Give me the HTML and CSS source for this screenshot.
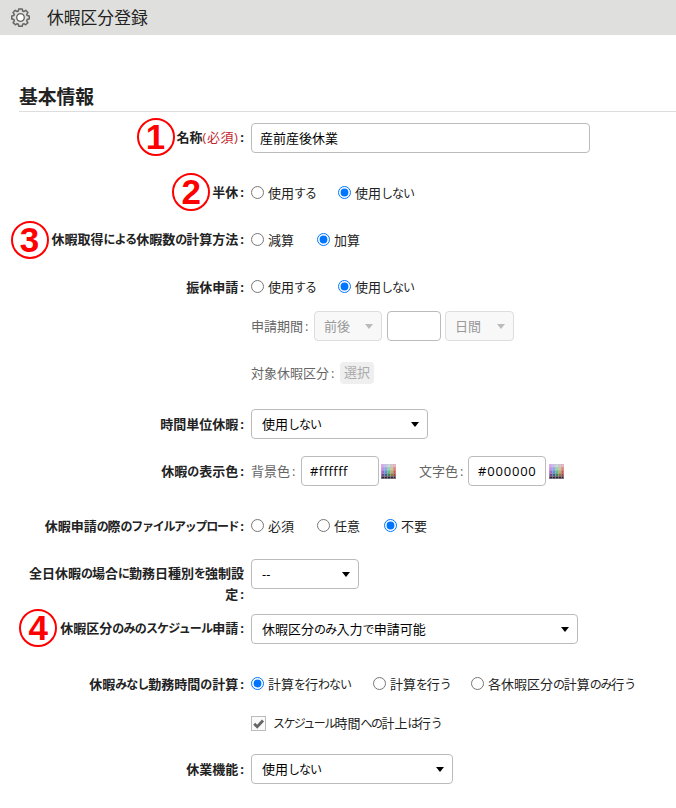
FILE: index.html
```
<!DOCTYPE html>
<html lang="ja">
<head>
<meta charset="utf-8">
<title>休暇区分登録</title>
<link rel="stylesheet" href="styles.css">
</head>
<body>
<svg class="defs" width="0" height="0">
  <symbol id="palette" viewBox="0 0 15 15">
    <rect width="15" height="15" fill="#b9a9b9"/>
    <path d="M0 0h3v3H0z" fill="#d9a8ee"/><path d="M3 0h3v3H3z" fill="#c6c2f5"/><path d="M6 0h3v3H6z" fill="#bfe0dc"/><path d="M9 0h3v3H9z" fill="#d9c6c8"/><path d="M12 0h3v3h-3z" fill="#f0b4b4"/>
    <path d="M0 3h3v3H0z" fill="#c78cf0"/><path d="M3 3h3v3H3z" fill="#86a8ee"/><path d="M6 3h3v3H6z" fill="#8fdcaa"/><path d="M9 3h3v3H9z" fill="#c5cf8c"/><path d="M12 3h3v3h-3z" fill="#ee7868"/>
    <path d="M0 6h3v3H0z" fill="#a466cf"/><path d="M3 6h3v3H3z" fill="#5690d8"/><path d="M6 6h3v3H6z" fill="#55c18a"/><path d="M9 6h3v3H9z" fill="#b2b45c"/><path d="M12 6h3v3h-3z" fill="#d94f48"/>
    <path d="M0 9h3v3H0z" fill="#704a94"/><path d="M3 9h3v3H3z" fill="#3c5f9c"/><path d="M6 9h3v3H6z" fill="#3a8a50"/><path d="M9 9h3v3H9z" fill="#867c3e"/><path d="M12 9h3v3h-3z" fill="#a43a34"/>
    <path d="M0 12h15v3H0z" fill="#28202c"/>
    <path d="M.5 0v15M3.5 0v15M6.5 0v15M9.5 0v15M12.5 0v15M0 .5h15M0 3.5h15M0 6.5h15M0 9.5h15M0 12.5h15M14.5 0v15M0 14.5h15" stroke="#cbbccd" stroke-width=".8" opacity=".6"/>
  </symbol>
</svg>

<header class="bar">
  <svg class="gear" viewBox="0 0 20 20" fill="none" stroke="#666" stroke-width="1.6" stroke-linejoin="round">
    <path d="M8.2 1h3.6l.5 2.2 1.2.5 2-1.3 2.3 2.4-1.3 1.9.5 1.3 2.2.4v3.3l-2.2.5-.5 1.3 1.3 1.9-2.4 2.3-1.9-1.2-1.2.5-.5 2.2H8.2l-.5-2.2-1.2-.5-1.9 1.2-2.4-2.3 1.3-1.9-.5-1.3L.8 11.700V8.400L3 8l.5-1.300-1.300-1.900 2.300-2.400 2 1.300 1.200-.5z"/>
    <circle cx="10" cy="10" r="3.900"/>
    <circle cx="10" cy="10" r="3.100" fill="#fff" stroke="none"/>
  </svg>
  <h1>休暇区分登録</h1>
</header>

<main>
  <h2>基本情報</h2>

  <div class="row r1">
    <label class="name"><span class="num">1</span>名称<span class="req">(必須)</span><b>:</b></label>
    <div class="box name-box">産前産後休業</div>
  </div>

  <div class="row r2">
    <label class="name"><span class="num">2</span>半休<b>:</b></label>
    <div class="opts">
      <label class="w87"><input type="radio" name="half"><span>使用<i>する</i></span></label>
      <label><input type="radio" name="half" checked><span>使用<i>しない</i></span></label>
    </div>
  </div>

  <div class="row r3">
    <label class="name"><span class="num">3</span>休暇取得<i>による</i>休暇数<i>の</i>計算方法<b>:</b></label>
    <div class="opts">
      <label class="w66"><input type="radio" name="calc"><span>減算</span></label>
      <label><input type="radio" name="calc" checked><span>加算</span></label>
    </div>
  </div>

  <div class="row r4">
    <label class="name">振休申請<b>:</b></label>
    <div class="opts">
      <label class="w87"><input type="radio" name="sub"><span>使用<i>する</i></span></label>
      <label><input type="radio" name="sub" checked><span>使用<i>しない</i></span></label>
    </div>
  </div>

  <div class="row r5">
    <span class="name"></span>
    <span class="gray period">申請期間<b>:</b></span>
    <div class="box select off s1">前後</div>
    <div class="box days"></div>
    <div class="box select off s2">日間</div>
  </div>

  <div class="row r6">
    <span class="name"></span>
    <span class="gray target">対象休暇区分<b>:</b></span>
    <span class="pick">選択</span>
  </div>

  <div class="row r7">
    <label class="name">時間単位休暇<b>:</b></label>
    <div class="box select w177"><span>使用<i>しない</i></span></div>
  </div>

  <div class="row r8">
    <label class="name">休暇<i class="wide">の</i>表示色<b>:</b></label>
    <span class="gray bg">背景色<b>:</b></span>
    <div class="box hex">#ffffff</div>
    <svg class="pal" viewBox="0 0 15 15"><use href="#palette"/></svg>
    <span class="gray fg">文字色<b>:</b></span>
    <div class="box hex digits">#000000</div>
    <svg class="pal last" viewBox="0 0 15 15"><use href="#palette"/></svg>
  </div>

  <div class="row r9">
    <label class="name">休暇申請<i class="tight">の</i>際<i class="tight">のファイルアップロード</i><b>:</b></label>
    <div class="opts">
      <label class="w66"><input type="radio" name="file"><span>必須</span></label>
      <label class="w67"><input type="radio" name="file"><span>任意</span></label>
      <label><input type="radio" name="file" checked><span>不要</span></label>
    </div>
  </div>

  <div class="row r10">
    <label class="name">全日休暇<i>の</i>場合<i>に</i>勤務日種別<i>を</i>強制設<br>定<b>:</b></label>
    <div class="box select w108">--</div>
  </div>

  <div class="row r11">
    <label class="name"><span class="num">4</span>休暇区分<i class="mid">のみのスケジュール</i>申請<b>:</b></label>
    <div class="box select w327"><span>休暇区分<i class="mid">のみ</i>入力<i class="mid">で</i>申請可能</span></div>
  </div>

  <div class="row r12">
    <label class="name">休暇<i>みなし</i>勤務時間<i class="wide">の</i>計算<b>:</b></label>
    <div class="opts">
      <label class="w122"><input type="radio" name="time" checked><span>計算<i>を</i>行<i>わない</i></span></label>
      <label class="w98"><input type="radio" name="time"><span>計算<i class="tight">を</i>行<i class="tight">う</i></span></label>
      <label><input type="radio" name="time"><span>各休暇区分<i class="tight">の</i>計算<i class="tight">のみ</i>行<i class="tight">う</i></span></label>
    </div>
  </div>

  <div class="row r13">
    <span class="name"></span>
    <span class="check"><svg viewBox="0 0 13 13"><path d="M2.200 6.800l3 3L11 3.500" fill="none" stroke="#666" stroke-width="2.800"/></svg></span>
    <span class="check-text"><i class="tighter">スケジュール</i>時間<i class="tighter">への</i>計上<i class="tighter">は</i>行<i class="tighter">う</i></span>
  </div>

  <div class="row r14">
    <label class="name">休業機能<b>:</b></label>
    <div class="box select w202"><span>使用<i>しない</i></span></div>
  </div>
</main>
</body>
</html>
```
FILE: styles.css
```
* { box-sizing: border-box; }
body {
  margin: 0;
  height: 808px;
  overflow: hidden;
  background: #fff;
  color: #222;
  font: 13px/21px "Open Sans", "Noto Sans CJK JP", sans-serif;
}
.defs { position: absolute; }
i { font-style: normal; font-size: 12px; letter-spacing: -1px; }
i.wide { letter-spacing: 0; }
i.mid { letter-spacing: -.8px; }
i.tight { letter-spacing: -1.3px; }
i.tighter { letter-spacing: -1.6px; }
b { margin-left: 2px; font-weight: inherit; }

.bar {
  display: flex;
  align-items: center;
  height: 35px;
  padding-left: 11px;
  background: #dfdfdd;
}
.gear { width: 19px; height: 19px; }
h1 { margin: 0 0 0 17px; font-size: 16.800px; font-weight: 400; line-height: 34px; }

h2 {
  height: 28px;
  margin: 49px 0 0 19px;
  border-bottom: 1px solid #ddd;
  font-size: 18.800px;
  font-weight: 700;
  line-height: 26px;
}

.row { display: flex; align-items: center; height: 30px; white-space: nowrap; }
.r1 { margin-top: 11px; }
.r2 { margin-top: 25px; }
.r3, .r4, .r6 { margin-top: 17px; }
.r5 { margin-top: 9px; }
.r7 { margin-top: 21px; }
.r8 { margin-top: 17px; }
.r9 { margin-top: 25px; }
.r10 { margin-top: 18px; height: 46px; align-items: flex-start; }
.r10 .name { padding-top: 4px; }
.r11 { margin-top: 9px; }
.r12 { margin-top: 25px; }
.r13 { margin-top: 9px; }
.r14 { margin-top: 16px; }

.name {
  display: block;
  flex: none;
  width: 244px;
  margin-right: 7px;
  text-align: right;
  font-weight: 700;
}
.req { color: #c1272d; font-weight: 400; letter-spacing: .5px; }
.num {
  position: relative;
  top: -2px;
  display: inline-block;
  width: 38px;
  height: 38px;
  margin: -9px 2px -9px 0;
  vertical-align: middle;
  border: 2px solid #f00;
  border-radius: 50%;
  color: #f00;
  font: 700 35px/34px "Liberation Sans", sans-serif;
  text-align: center;
}
.r3 .num { top: -1px; margin-right: 3px; }
.r11 .num { margin-right: 3px; }

.opts { display: flex; }
.opts label { display: flex; align-items: center; }
.opts input { width: 13px; height: 13px; margin: -2px 4px 0 0; }
.w66 { width: 66px; }
.w67 { width: 67px; }
.w87 { width: 87px; }
.w98 { width: 98px; }
.w122 { width: 122px; }

.box {
  flex: none;
  height: 30px;
  padding-left: 8px;
  border: 1px solid #bbb;
  border-radius: 4px;
  background: #fff;
  color: #000;
  line-height: 29px;
}
.name-box { width: 339px; }
.select {
  display: flex;
  align-items: center;
  justify-content: space-between;
  padding: 0 8px 0 10px;
}
.select::after {
  content: "";
  border: 4.500px solid transparent;
  border-top: 5.500px solid #000;
  border-bottom: 0;
}
.off { border-color: #ddd; background: #f8f8f8; color: #999; padding-left: 9px; }
.off::after { border-top-color: #bbb; }
.gray { color: #666; }
.period { width: 63px; }
.s1 { width: 68px; }
.days { width: 54px; margin: 0 4px 0 5px; }
.s2 { width: 69px; }
.target { width: 89px; }
.pick {
  width: 34px;
  height: 22px;
  border-radius: 4px;
  background: #efefef;
  color: #aaa;
  text-align: center;
}
.w177 { width: 177px; }
.w108 { width: 108px; }
.w327 { width: 327px; }
.w202 { width: 202px; }
.bg { width: 50px; }
.hex { width: 78px; letter-spacing: .45px; }
.digits { padding-left: 9px; letter-spacing: .8px; }
.pal { width: 15px; height: 15px; margin-left: 2px; }
.pal.last { margin-left: 3px; }
.fg { width: 49px; margin-left: 23px; }
.check { width: 15px; height: 15px; border: 1px solid #bbb; background: #fafafa; }
.check svg { display: block; width: 13px; height: 13px; }
.check-text { margin-left: 7px; }
```
